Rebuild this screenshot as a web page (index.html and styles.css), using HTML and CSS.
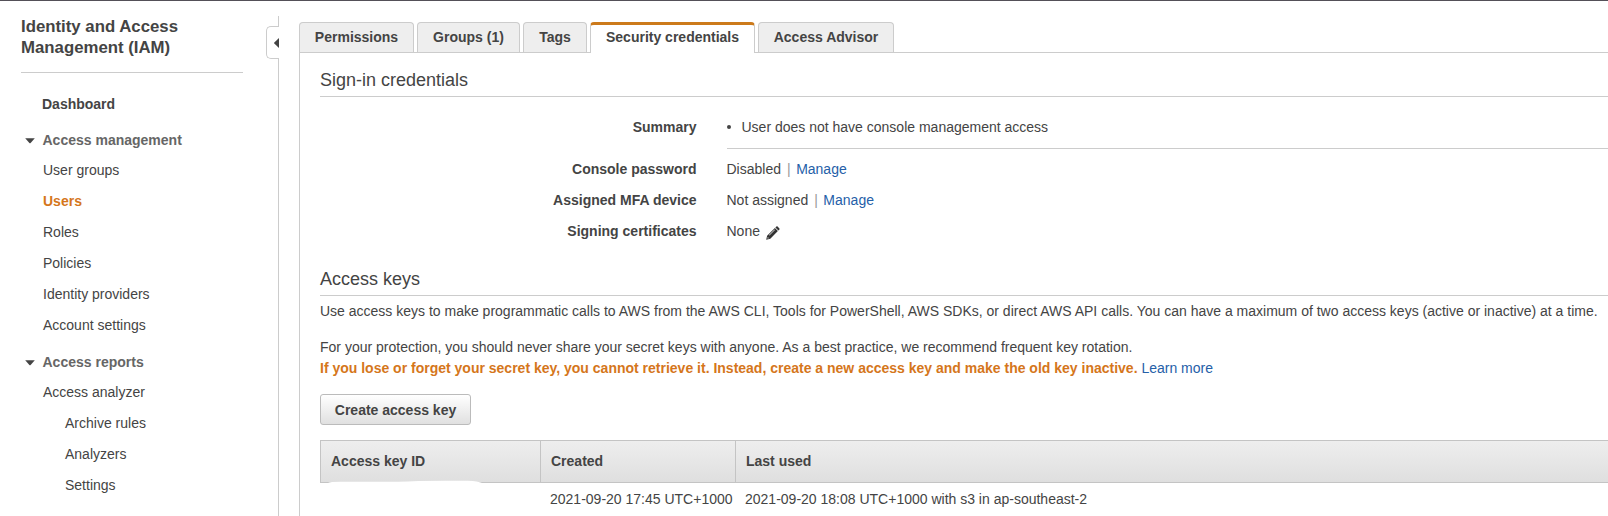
FILE: index.html
```html
<!DOCTYPE html>
<html lang="en">
<head>
<meta charset="utf-8">
<title>IAM - Security credentials</title>
<link rel="stylesheet" href="styles.css">
</head>
<body>
<div class="app">
  <nav class="sidebar">
    <h1 class="sidebar-title">Identity and Access<br>Management (IAM)</h1>
    <ul class="nav">
      <li class="nav-home">Dashboard</li>
      <li class="nav-group"><svg class="caret" viewBox="0 0 10 6"><path d="M0.2 0.3H9.8L5.6 5Q5 5.6 4.4 5Z"/></svg>Access management</li>
      <li class="nav-item">User groups</li>
      <li class="nav-item active">Users</li>
      <li class="nav-item">Roles</li>
      <li class="nav-item">Policies</li>
      <li class="nav-item">Identity providers</li>
      <li class="nav-item">Account settings</li>
      <li class="nav-group"><svg class="caret" viewBox="0 0 10 6"><path d="M0.2 0.3H9.8L5.6 5Q5 5.6 4.4 5Z"/></svg>Access reports</li>
      <li class="nav-item">Access analyzer</li>
      <li class="nav-item sub">Archive rules</li>
      <li class="nav-item sub">Analyzers</li>
      <li class="nav-item sub">Settings</li>
    </ul>
  </nav>
  <div class="divider">
    <div class="line-top"></div>
    <div class="handle"><svg class="handle-arrow" viewBox="0 0 5 10"><path d="M5 0V10L0.3 5.6Q-0.2 5 0.3 4.4Z"/></svg></div>
    <div class="line-rest"></div>
  </div>
  <main class="main">
    <div class="tabs">
      <div class="tab tab-permissions">Permissions</div>
      <div class="tab tab-groups">Groups (1)</div>
      <div class="tab tab-tags">Tags</div>
      <div class="tab tab-security current">Security credentials</div>
      <div class="tab tab-advisor">Access Advisor</div>
    </div>
    <div class="panel">
      <h2 class="section-title">Sign-in credentials</h2>
      <dl class="fields">
        <dt class="first">Summary</dt>
        <dd class="first summary"><span class="bullet"></span>User does not have console management access</dd>
        <dt>Console password</dt>
        <dd>Disabled<span class="sep">|</span><a class="link">Manage</a></dd>
        <dt>Assigned MFA device</dt>
        <dd>Not assigned<span class="sep">|</span><a class="link">Manage</a></dd>
        <dt>Signing certificates</dt>
        <dd>None<svg class="pencil" viewBox="0 0 14 14"><path d="M9.4 1.6 10.4 0.6Q11 0 11.6 0.6L13.4 2.4Q14 3 13.4 3.6L12.4 4.6Z"/><path fill-rule="evenodd" d="M8.9 2.1 11.9 5.1 4.3 12.8 0.2 13.8 1.1 9.8ZM8.5 3.6 3 9.1 3.4 9.5 8.9 4ZM1.8 11.1 1.5 12.5 2.9 12.2Z"/></svg></dd>
      </dl>
      <h2 class="section-title keys">Access keys</h2>
      <p class="text intro">Use access keys to make programmatic calls to AWS from the AWS CLI, Tools for PowerShell, AWS SDKs, or direct AWS API calls. You can have a maximum of two access keys (active or inactive) at a time.</p>
      <p class="text">For your protection, you should never share your secret keys with anyone. As a best practice, we recommend frequent key rotation.<br><strong class="warn">If you lose or forget your secret key, you cannot retrieve it. Instead, create a new access key and make the old key inactive.</strong> <a class="link">Learn more</a></p>
      <button class="create">Create access key</button>
      <div class="table">
        <div class="row head">
          <div class="cell">Access key ID</div><div class="cell">Created</div><div class="cell">Last used</div>
          <svg class="redaction" viewBox="0 0 154 3"><path d="M0 3Q2 1.8 12 1.8L70 1.8Q95 0.2 140 0.8Q150 1.2 154 3Z"/></svg>
        </div>
        <div class="row body">
          <div class="cell"></div><div class="cell">2021-09-20 17:45 UTC+1000</div><div class="cell">2021-09-20 18:08 UTC+1000 with s3 in ap-southeast-2</div>
        </div>
      </div>
    </div>
  </main>
</div>
</body>
</html>
```

FILE: styles.css
```css
* { box-sizing: border-box; }
body {
  margin: 0;
  background: #fff;
  color: #444;
  font: 14px/21px "Liberation Sans", Arial, sans-serif;
  overflow: hidden;
}
h1, h2, p, ul, dl, dd { margin: 0; padding: 0; }
ul { list-style: none; }
.app {
  display: flex;
  width: 1608px;
  height: 516px;
  border-top: 1px solid #545058;
  overflow: hidden;
}

/* Sidebar */
.sidebar { width: 266px; padding: 15px 23px 0 21px; flex: none; }
.sidebar-title {
  font-size: 16.8px;
  line-height: 21px;
  padding-bottom: 14px;
  border-bottom: 1px solid #ccc;
}
.nav { padding-top: 21px; }
.nav-home { font-weight: bold; padding-left: 21px; line-height: 21px; margin-bottom: 15px; }
.nav-group {
  display: flex;
  align-items: center;
  font-weight: bold;
  color: #666;
  line-height: 21px;
  margin-bottom: 4px;
}
.nav-item { padding-left: 22px; line-height: 31px; white-space: nowrap; }
.nav-item + .nav-group { margin-top: 11px; }
.nav-item.sub { padding-left: 44px; }
.nav-item.active { color: #d5761b; font-weight: bold; }
.caret { width: 10px; height: 6px; margin: 1px 7.5px 0 4px; fill: #444; flex: none; }

/* Collapse handle */
.divider { width: 13px; flex: none; display: flex; flex-direction: column; padding-top: 15px; }
.line-top { height: 10px; border-right: 1px solid #ccc; }
.handle {
  height: 33px;
  border: 1px solid #ccc;
  border-right: 0;
  border-radius: 5px 0 0 5px;
  display: flex;
  align-items: center;
  justify-content: flex-end;
}
.handle-arrow { width: 5px; height: 10px; fill: #444; }
.line-rest { flex: 1; border-right: 1px solid #ccc; }

/* Tabs */
.main { flex: 1; margin-left: 20px; padding-top: 21px; display: flex; flex-direction: column; min-width: 0; }
.tabs { display: flex; gap: 3px; height: 30px; flex: none; }
.tab {
  height: 30px;
  border: 1px solid #ccc;
  border-bottom: 0;
  border-radius: 4px 4px 0 0;
  background: #eee;
  font-weight: bold;
  text-align: center;
  line-height: 28px;
  white-space: nowrap;
}
.tab-permissions { width: 115px; }
.tab-groups { width: 103px; }
.tab-tags { width: 64px; }
.tab-security { width: 165px; }
.tab-advisor { width: 136px; }
.tab.current { height: 31px; background: #fff; border-top: 3px solid #cc7a1b; line-height: 24px; z-index: 1; }
.panel { flex: 1; border: solid #ccc; border-width: 1px 0 0 1px; padding: 17px 0 0 20px; }

/* Sections */
.section-title { font-size: 18px; font-weight: normal; line-height: 21px; height: 27px; border-bottom: 1px solid #ccc; }
.section-title.keys { margin-top: 22px; }
.fields { display: grid; grid-template-columns: 376.5px 1fr; column-gap: 30px; padding-top: 10px; }
.fields dt, .fields dd { line-height: 31px; white-space: nowrap; }
.fields dt { font-weight: bold; text-align: right; }
.fields dd { display: flex; align-items: center; }
.fields .first { height: 42px; margin-bottom: 5px; line-height: 40px; padding-bottom: 1px; }
.fields dd.first { border-bottom: 1px solid #ccc; }
.bullet { width: 4px; height: 4px; border-radius: 50%; background: #444; margin-right: 11px; }
.sep { color: #999; margin: 0 5.5px 0 6px; }
.link { color: #2560a8; }
.pencil { width: 14px; height: 14px; margin: 2px 0 0 6px; fill: #333; }
.text { white-space: nowrap; }
.intro { margin: 5px 0 15px; }
.warn { color: #d5761b; }
.create {
  display: block;
  width: 151px;
  height: 31px;
  margin-top: 15px;
  padding: 0;
  border: 1px solid #bbb;
  border-radius: 3px;
  background: linear-gradient(#fff, #e0e0e0);
  color: #444;
  font: bold 14px/28px "Liberation Sans", Arial, sans-serif;
}

/* Access key table */
.table { margin-top: 15px; }
.row { display: grid; grid-template-columns: 221px 195px 1fr; white-space: nowrap; }
.head {
  position: relative;
  height: 43px;
  border: solid #c4c4c4;
  border-width: 1px 0 1px 1px;
  grid-template-columns: 220px 195px 1fr;
  background: linear-gradient(#eee, #dfdfdf);
  font-weight: bold;
  line-height: 41px;
}
.head .cell { padding-left: 10px; border-right: 1px solid #c4c4c4; }
.head .cell:nth-child(3) { border-right: 0; }
.redaction { position: absolute; left: 7px; bottom: -1px; width: 154px; height: 3px; fill: #fff; }
.body { line-height: 33px; }
.body .cell { padding-left: 9px; }
```
